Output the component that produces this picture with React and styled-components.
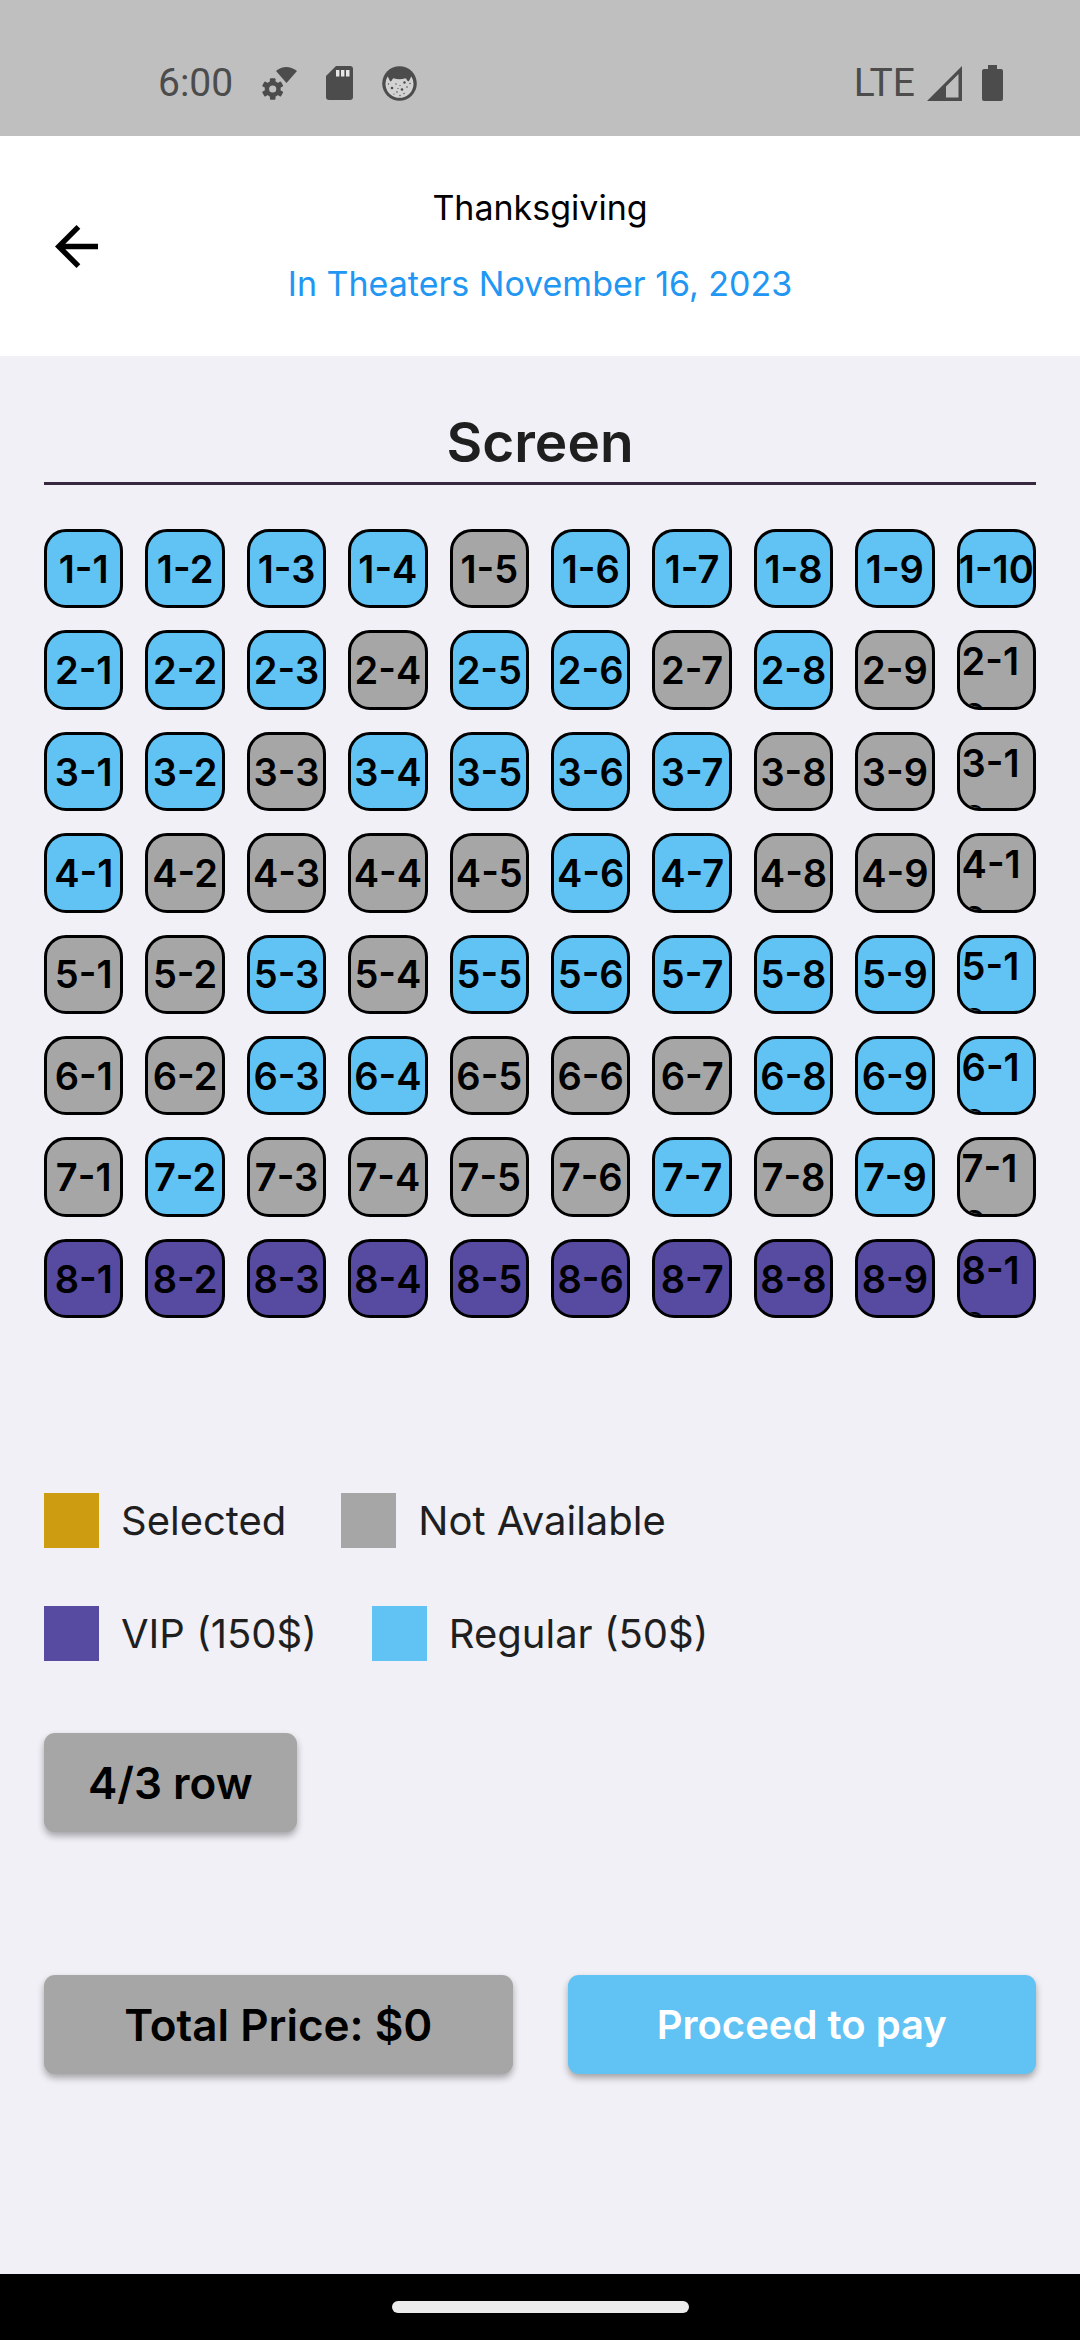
import React from "react";
import styled, { createGlobalStyle } from "styled-components";

const GlobalStyle = createGlobalStyle`
  * { box-sizing: border-box; }
  body { margin: 0; background: #f1f0f6; }
  button { font: inherit; }
`;

const colors = {
  regular: "#60c3f4",
  taken: "#a6a6a6",
  vip: "#564ba1",
  selected: "#cd9c10",
  status: "#4c4c4c",
};

const Page = styled.div`
  min-height: 100vh;
  display: flex;
  flex-direction: column;
  font-family: Inter, "Open Sans", sans-serif;
  color: #1f1f1f;
`;

const StatusBar = styled.div`
  height: 136px;
  padding: 30px 77px 0 158px;
  display: flex;
  align-items: center;
  justify-content: space-between;
  background: #bfbfbf;
  color: ${colors.status};
  font-family: Roboto, sans-serif;
  svg { display: block; fill: currentColor; }
`;

const StatusGroup = styled.div`
  display: flex;
  align-items: center;
  gap: ${(p) => p.$gap}px;
`;

const StatusText = styled.span`
  font-size: 39px;
  line-height: 48px;
`;

const Network = styled(StatusText)`
  margin-right: -8px;
`;

const Header = styled.header`
  min-height: 220px;
  padding: 0 44px;
  display: grid;
  grid-template-columns: 1fr auto 1fr;
  align-items: center;
  background: #fff;
`;

const BackButton = styled.button`
  width: 64px;
  height: 64px;
  padding: 0;
  display: grid;
  place-items: center;
  border: 0;
  background: none;
  color: #000;
  cursor: pointer;
`;

const Heading = styled.div`
  display: flex;
  flex-direction: column;
  gap: 26px;
  text-align: center;
  font-size: 34px;
  line-height: 50px;
`;

const MovieTitle = styled.h1`
  margin: 0;
  font: inherit;
  color: #000;
`;

const Release = styled.p`
  margin: 0;
  color: #2196f3;
`;

const Main = styled.main`
  flex: 1;
  padding: 50px 44px;
`;

const ScreenLabel = styled.h2`
  margin: 0 0 44px;
  padding-bottom: 4px;
  border-bottom: 3px solid #35283f;
  text-align: center;
  font-size: 55px;
  font-weight: 600;
  line-height: 72px;
`;

const Seats = styled.div`
  display: grid;
  grid-template-columns: repeat(10, minmax(0, 1fr));
  gap: 22px;
`;

const Seat = styled.button`
  aspect-ratio: 1;
  min-width: 0;
  min-height: 0;
  padding: 0;
  display: flex;
  align-items: center;
  justify-content: center;
  overflow: hidden;
  border: 3px solid #000;
  border-radius: 22px;
  background: ${(p) => colors[p.$kind]};
  color: #000;
  cursor: pointer;
`;

const SeatLabel = styled.span`
  flex: ${(p) => (p.$wrap ? "1 1 0" : "none")};
  max-height: 100%;
  padding-left: ${(p) => (p.$wrap ? 2 : 0)}px;
  text-align: left;
  white-space: ${(p) => (p.$wrap ? "normal" : "nowrap")};
  word-break: break-all;
  font-size: 38px;
  font-weight: 600;
  line-height: 56px;
`;

const Legend = styled.ul`
  margin: 175px 0 72px;
  padding: 0;
  display: flex;
  flex-direction: column;
  gap: 58px;
  list-style: none;
`;

const LegendRow = styled.li`
  display: flex;
  gap: 55px;
`;

const LegendItem = styled.span`
  display: flex;
  align-items: center;
  gap: 22px;
  font-size: 40px;
  line-height: 55px;
`;

const Swatch = styled.i`
  width: 55px;
  height: 55px;
  background: ${(p) => colors[p.$kind]};
`;

const ActionButton = styled.button`
  height: 99px;
  padding: 0 44px;
  border: 0;
  border-radius: 11px;
  background: ${(p) => colors[p.$kind]};
  color: ${(p) => (p.$kind === "regular" ? "#fff" : "#000")};
  box-shadow: 0 4px 7px rgba(0, 0, 0, 0.32);
  font-size: ${(p) => (p.$kind === "regular" ? 40 : 44)}px;
  font-weight: 600;
  line-height: 56px;
  white-space: nowrap;
  cursor: pointer;
`;

const Checkout = styled.div`
  margin-top: 143px;
  display: grid;
  grid-template-columns: 1fr 1fr;
  gap: 55px;
`;

const NavBar = styled.div`
  height: 66px;
  display: grid;
  place-items: center;
  background: #000;
`;

const NavHandle = styled.div`
  width: 297px;
  height: 12px;
  border-radius: 6px;
  background: #ebebeb;
`;

// One letter per seat: r = regular, x = not available, v = VIP.
const plan = [
  "rrrrxrrrrr",
  "rrrxrrxrxx",
  "rrxrrrrxxx",
  "rxxxxrrxxx",
  "xxrxrrrrrr",
  "xxrrxxxrrr",
  "xrxxxxrxrx",
  "vvvvvvvvvv",
];
const kinds = { r: "regular", x: "taken", v: "vip" };

const legend = [
  [["selected", "Selected"], ["taken", "Not Available"]],
  [["vip", "VIP (150$)"], ["regular", "Regular (50$)"]],
];

function SettingsWifiIcon() {
  return (
    <svg width="35" height="34" viewBox="0 0 35 34" aria-hidden="true">
      <path d="M14 5Q24-3 35 5L24.5 17Z" />
      <g transform="translate(10.7 23)">
        {[0, 60, 120].map((a) => (
          <rect key={a} x="-2.8" y="-10.8" width="5.6" height="21.6" rx="1" transform={`rotate(${a})`} />
        ))}
        <circle r="8" />
        <circle r="3.6" fill="#bfbfbf" />
      </g>
    </svg>
  );
}

function SdCardIcon() {
  return (
    <svg width="27" height="34" viewBox="0 0 27 34" aria-hidden="true">
      <path d="M10 0H24Q27 0 27 3V31Q27 34 24 34H3Q0 34 0 31V10Z" />
      <path fill="#e6e6e6" d="M10 4h3.4v6.500H10zM15 4h3.400v6.500H15zM20 4h3.500v6.500H20z" />
    </svg>
  );
}

function FaceIcon() {
  return (
    <svg width="35" height="35" viewBox="0 0 35 35" aria-hidden="true">
      <circle cx="17.500" cy="17.500" r="17.300" />
      <path
        fill="#d2d2d2"
        d="M5.600 10.500C7 12 7.200 14.500 8.600 15.400 10 15 10 13 11.500 12.200Q17.500 14.500 23.500 12.200C25 13 25 15 26.400 15.400 27.800 14.500 28 12 29.400 10.500A14 14 0 1 1 5.600 10.500Z"
      />
      {[[10, 22, 1.300], [20, 23.500, 1.300], [22.500, 16.500, 1.200], [14, 18, 0.7], [15, 26, 0.8], [25, 21, 0.8], [18, 19.500, 0.6], [6.500, 18, 0.7], [12, 28, 0.6], [22, 27.500, 0.7], [28, 17.500, 0.7], [16, 22.500, 0.6], [18, 29.500, 0.7]].map(
        ([x, y, r]) => <circle key={`${x}-${y}`} cx={x} cy={y} r={r} />
      )}
    </svg>
  );
}

function SignalIcon() {
  return (
    <svg width="35" height="35" viewBox="0 0 35 35" aria-hidden="true">
      <path fillRule="evenodd" d="M0 35L35 0V35ZM19 20.500V31.500H31.500V8Z" />
    </svg>
  );
}

function BatteryIcon() {
  return (
    <svg width="21" height="36" viewBox="0 0 21 36" aria-hidden="true">
      <path d="M6 0h9v4h4q2 0 2 2v28q0 2-2 2H2q-2 0-2-2V6q0-2 2-2h4z" />
    </svg>
  );
}

export default function App() {
  return (
    <Page>
      <GlobalStyle />
      <StatusBar>
        <StatusGroup $gap={29}>
          <StatusText>6:00</StatusText>
          <SettingsWifiIcon />
          <SdCardIcon />
          <FaceIcon />
        </StatusGroup>
        <StatusGroup $gap={20}>
          <Network>LTE</Network>
          <SignalIcon />
          <BatteryIcon />
        </StatusGroup>
      </StatusBar>

      <Header>
        <BackButton type="button" aria-label="Back">
          <svg width="43" height="43" viewBox="4 4 16 16" fill="currentColor" aria-hidden="true">
            <path d="M20 11H7.830l5.590-5.590L12 4l-8 8 8 8 1.410-1.410L7.830 13H20v-2z" />
          </svg>
        </BackButton>
        <Heading>
          <MovieTitle>Thanksgiving</MovieTitle>
          <Release>In Theaters November 16, 2023</Release>
        </Heading>
      </Header>

      <Main>
        <ScreenLabel>Screen</ScreenLabel>
        <Seats>
          {plan.map((row, r) =>
            [...row].map((code, c) => (
              <Seat key={`${r}-${c}`} type="button" $kind={kinds[code]}>
                <SeatLabel $wrap={r > 0 && c === 9}>{`${r + 1}-${c + 1}`}</SeatLabel>
              </Seat>
            ))
          )}
        </Seats>

        <Legend>
          {legend.map((row) => (
            <LegendRow key={row[0][0]}>
              {row.map(([kind, label]) => (
                <LegendItem key={kind}>
                  <Swatch $kind={kind} />
                  {label}
                </LegendItem>
              ))}
            </LegendRow>
          ))}
        </Legend>

        <ActionButton type="button" $kind="taken">4/3 row</ActionButton>

        <Checkout>
          <ActionButton type="button" $kind="taken">Total Price: $0</ActionButton>
          <ActionButton type="button" $kind="regular">Proceed to pay</ActionButton>
        </Checkout>
      </Main>

      <NavBar>
        <NavHandle />
      </NavBar>
    </Page>
  );
}
